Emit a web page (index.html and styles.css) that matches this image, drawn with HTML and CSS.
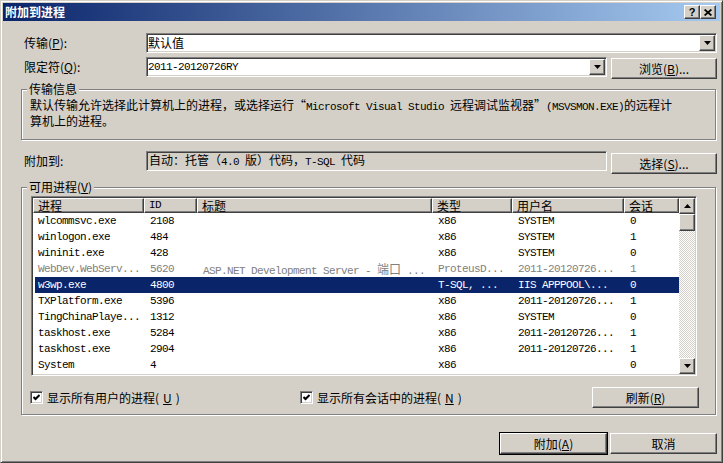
FILE: index.html
```html
<!DOCTYPE html>
<html lang="zh-CN">
<head>
<meta charset="utf-8">
<title>附加到进程</title>
<link rel="stylesheet" href="styles.css">
</head>
<body>
<div class="window">
  <div class="titlebar">
    <span class="title">附加到进程</span>
    <div class="caps">
      <span class="capbtn raised help">?</span>
      <span class="capbtn raised close"><svg width="8" height="7" viewBox="0 0 8 7"><path d="M0.6 0.5L7.4 6.5M7.4 0.5L0.6 6.5" stroke="#000" stroke-width="1.7" fill="none"/></svg></span>
    </div>
  </div>
  <div class="content">
    <div class="frow r1">
      <label class="lbl">传输(<u>P</u>):</label>
      <div class="combo wide">
        <span class="val">默认值</span>
        <span class="drop raised"><svg width="7" height="4" viewBox="0 0 7 4"><path d="M0 0H7L3.5 4Z" fill="#000"/></svg></span>
      </div>
    </div>
    <div class="frow r2">
      <label class="lbl">限定符(<u>Q</u>):</label>
      <div class="combo short">
        <span class="val m">2011-20120726RY</span>
        <span class="drop raised"><svg width="7" height="4" viewBox="0 0 7 4"><path d="M0 0H7L3.5 4Z" fill="#000"/></svg></span>
      </div>
      <span class="btn raised side">浏览(<u>B</u>)...</span>
    </div>
    <div class="group g1">
      <span class="legend">传输信息</span>
      <div class="desc">默认传输允许选择此计算机上的进程，或选择运行“<span class="m">Microsoft Visual Studio </span>远程调试监视器”<span class="m">(MSVSMON.EXE)</span>的远程计<br>算机上的进程。</div>
    </div>
    <div class="frow r3">
      <label class="lbl">附加到:</label>
      <div class="field"><span class="ftext">自动：托管（<span class="m">4.0 </span>版）代码，<span class="m">T-SQL </span>代码</span></div>
      <span class="btn raised side">选择(<u>S</u>)...</span>
    </div>
    <div class="group g2">
      <span class="legend">可用进程(<u>V</u>)</span>
      <div class="list">
        <div class="lv">
          <div class="hdr">
            <span class="hc raised">进程</span>
            <span class="hc raised m">ID</span>
            <span class="hc raised">标题</span>
            <span class="hc raised">类型</span>
            <span class="hc raised">用户名</span>
            <span class="hc raised">会话</span>
          </div>
          <div class="lr"><span>wlcommsvc.exe</span><span>2108</span><span></span><span>x86</span><span>SYSTEM</span><span>0</span></div>
          <div class="lr"><span>winlogon.exe</span><span>484</span><span></span><span>x86</span><span>SYSTEM</span><span>1</span></div>
          <div class="lr"><span>wininit.exe</span><span>428</span><span></span><span>x86</span><span>SYSTEM</span><span>0</span></div>
          <div class="lr dis"><span>WebDev.WebServ...</span><span>5620</span><span>ASP.NET Development Server - <b class="c">端口</b> ...</span><span>ProteusD...</span><span>2011-20120726...</span><span>1</span></div>
          <div class="lr sel"><span>w3wp.exe</span><span>4800</span><span></span><span>T-SQL, ...</span><span>IIS APPPOOL\...</span><span>0</span></div>
          <div class="lr"><span>TXPlatform.exe</span><span>5396</span><span></span><span>x86</span><span>2011-20120726...</span><span>1</span></div>
          <div class="lr"><span>TingChinaPlaye...</span><span>1312</span><span></span><span>x86</span><span>SYSTEM</span><span>0</span></div>
          <div class="lr"><span>taskhost.exe</span><span>5284</span><span></span><span>x86</span><span>2011-20120726...</span><span>1</span></div>
          <div class="lr"><span>taskhost.exe</span><span>2904</span><span></span><span>x86</span><span>2011-20120726...</span><span>1</span></div>
          <div class="lr"><span>System</span><span>4</span><span></span><span>x86</span><span></span><span>0</span></div>
        </div>
        <div class="sb">
          <span class="sbb raised"><svg width="7" height="4" viewBox="0 0 7 4"><path d="M0 4H7L3.5 0Z" fill="#000"/></svg></span>
          <span class="thumb raised"></span>
          <span class="track"></span>
          <span class="sbb raised"><svg width="7" height="4" viewBox="0 0 7 4"><path d="M0 0H7L3.5 4Z" fill="#000"/></svg></span>
        </div>
      </div>
      <div class="chkrow">
        <label class="chk chk1"><span class="box"><svg width="7" height="7" viewBox="0 0 7 7"><polyline points="0.5,3 2.5,5 6.5,1" stroke="#000" stroke-width="2" fill="none"/></svg></span>显示所有用户的进程(<u>U</u>)</label>
        <label class="chk"><span class="box"><svg width="7" height="7" viewBox="0 0 7 7"><polyline points="0.5,3 2.5,5 6.5,1" stroke="#000" stroke-width="2" fill="none"/></svg></span>显示所有会话中的进程(<u>N</u>)</label>
        <span class="btn raised refresh">刷新(<u>R</u>)</span>
      </div>
    </div>
    <div class="actions">
      <span class="btn raised default">附加(<u>A</u>)</span>
      <span class="btn raised">取消</span>
    </div>
  </div>
</div>
</body>
</html>
```
FILE: styles.css
```css
* { box-sizing: border-box; }
html, body { margin: 0; padding: 0; background: #d4d0c8; }
body {
  font-family: "Noto Sans CJK SC", "Liberation Sans", sans-serif;
  font-size: 12px;
  line-height: 14px;
  color: #000;
}
u { text-decoration: underline; text-underline-offset: 1px; }
.m {
  font-family: "Liberation Mono", "DejaVu Sans Mono", monospace;
  font-size: 11px;
  letter-spacing: -0.6px;
}
.c {
  font-family: "Noto Sans CJK SC", sans-serif;
  font-size: 12px;
  font-weight: normal;
  letter-spacing: 0;
}
.raised {
  background: #d4d0c8;
  border: 1px solid;
  border-color: #fff #404040 #404040 #fff;
  box-shadow: inset -1px -1px #808080;
}
.window {
  width: 723px;
  height: 463px;
  border: 1px solid;
  border-color: #d4d0c8 #404040 #404040 #d4d0c8;
  box-shadow: inset 1px 1px #fff, inset -1px -1px #808080;
  padding: 2px;
  display: flex;
  flex-direction: column;
  background: #d4d0c8;
}
.titlebar {
  height: 18px;
  flex: none;
  display: flex;
  align-items: center;
  justify-content: space-between;
  padding: 0 4px 0 2px;
  background: linear-gradient(to right, #0a246a, #a6caf0);
}
.title { color: #fff; font-weight: bold; font-size: 12px; }
.caps { display: flex; }
.capbtn {
  width: 16px;
  height: 14px;
  display: flex;
  align-items: center;
  justify-content: center;
  font-family: "Liberation Sans", sans-serif;
  font-weight: bold;
  font-size: 11px;
  line-height: 12px;
}
.content {
  flex: 1;
  display: flex;
  flex-direction: column;
  padding: 0 3px 0 15px;
}
.frow { display: flex; align-items: flex-start; }
.r1 { margin-top: 12px; }
.r2 { margin-top: 4px; }
.r3 { margin-top: 11px; }
.lbl {
  width: 128px;
  height: 20px;
  padding-left: 6px;
  display: flex;
  align-items: center;
  flex: none;
}
.combo {
  height: 20px;
  display: flex;
  align-items: center;
  padding: 1px;
  background: #fff;
  border: 1px solid;
  border-color: #808080 #fff #fff #808080;
  box-shadow: inset 1px 1px #404040, inset -1px -1px #d4d0c8;
}
.combo.wide { flex: 1; }
.combo.short { width: 461px; flex: none; }
.val { flex: 1; white-space: nowrap; }
.drop {
  width: 16px;
  height: 16px;
  display: flex;
  align-items: center;
  justify-content: center;
  flex: none;
}
.btn {
  width: 107px;
  height: 21px;
  display: flex;
  align-items: center;
  justify-content: center;
  white-space: nowrap;
  flex: none;
}
.btn.side { width: 106px; margin-left: 4px; }
.r2 .btn { margin-top: 1px; }
.r3 .btn { margin-top: 2px; }
.field {
  width: 461px;
  height: 20px;
  flex: none;
  display: flex;
  align-items: center;
  padding-left: 2px;
  border: 1px solid;
  border-color: #808080 #fff #fff #808080;
  box-shadow: inset 1px 1px #404040, inset -1px -1px #d4d0c8;
}
.ftext { white-space: pre; }
.group {
  display: flex;
  flex-direction: column;
  align-items: flex-start;
  border: 1px solid #808080;
  box-shadow: inset 1px 1px #fff, 1px 1px #fff;
  margin-left: 3px;
  margin-right: 1px;
}
.legend {
  margin-top: -8px;
  line-height: 14px;
  padding: 0 2px;
  background: #d4d0c8;
}
.g1 { margin-top: 10px; padding: 0 8px 12px 8px; }
.g1 .legend { margin-left: -3px; }
.desc { margin-top: 2px; line-height: 13px; white-space: nowrap; }
.g2 { margin-top: 13px; padding: 0 18px 6px 9px; }
.g2 .legend { margin-left: -4px; }
.list {
  width: 666px;
  height: 180px;
  margin-top: 2px;
  display: flex;
  padding: 1px;
  background: #fff;
  border: 1px solid;
  border-color: #808080 #fff #fff #808080;
  box-shadow: inset 1px 1px #404040, inset -1px -1px #d4d0c8;
}
.lv { flex: 1; display: flex; flex-direction: column; min-width: 0; }
.hdr, .lr {
  display: grid;
  grid-template-columns: 111px 53px 235px 80px 112px 55px;
}
.hdr { height: 15px; flex: none; }
.hc {
  padding-left: 4px;
  line-height: 13px;
  white-space: nowrap;
}
.lr {
  height: 16px;
  line-height: 16px;
  font-family: "Liberation Mono", "DejaVu Sans Mono", monospace;
  font-size: 11px;
  letter-spacing: -0.6px;
}
.lr span { padding-left: 6px; white-space: nowrap; overflow: hidden; }
.lr span:first-child { padding-left: 5px; }
.lr.dis { color: #808080; }
.lr.sel {
  color: #fff;
  background: linear-gradient(#0a246a, #0a246a) 2px 0 / calc(100% - 2px) 100% no-repeat;
}
.sb {
  width: 16px;
  flex: none;
  display: flex;
  flex-direction: column;
  background: repeating-conic-gradient(#d4d0c8 0 25%, #fff 0 50%) 0 0 / 2px 2px;
}
.sbb {
  width: 16px;
  height: 16px;
  flex: none;
  display: flex;
  align-items: center;
  justify-content: center;
}
.thumb { width: 16px; height: 17px; flex: none; }
.track { flex: 1; }
.chkrow {
  margin-top: 11px;
  width: 666px;
  display: flex;
  align-items: center;
}
.chk { display: flex; align-items: center; gap: 4px; white-space: nowrap; }
.chk1 { margin-left: -1px; width: 270px; }
.box {
  width: 13px;
  height: 13px;
  display: flex;
  align-items: center;
  justify-content: center;
  background: #fff;
  border: 1px solid;
  border-color: #808080 #fff #fff #808080;
  box-shadow: inset 1px 1px #404040, inset -1px -1px #d4d0c8;
}
.refresh { margin-left: auto; margin-right: -2px; }
.actions {
  margin-top: 18px;
  display: flex;
  justify-content: flex-end;
  gap: 3px;
}
.default { outline: 1px solid #000; }
```
